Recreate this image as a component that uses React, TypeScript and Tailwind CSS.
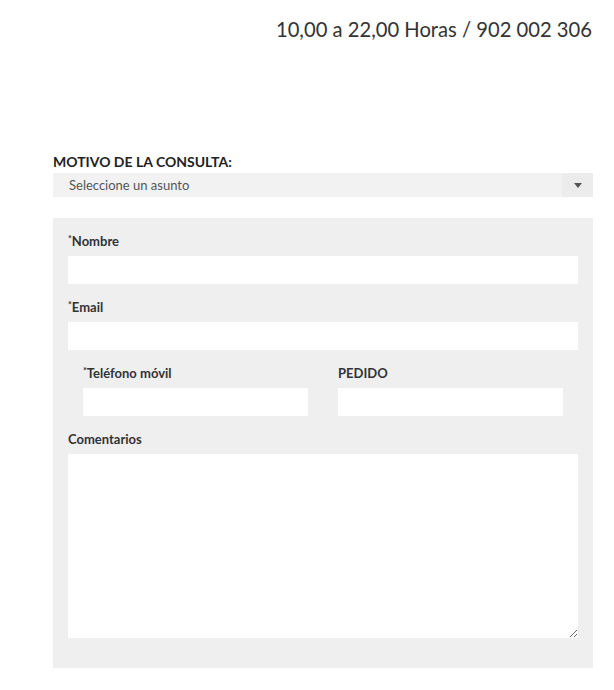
// Formulario de contacto — horario, motivo y datos del cliente

function Label({ text, required }: { text: string; required?: boolean }) {
  return (
    <label className="mb-[5px] block h-[20px] text-[13px] leading-[20px] font-bold text-[#333]">
      {required && <sup className="text-[9px]">*</sup>}
      {text}
    </label>
  );
}

function Input() {
  return <input type="text" className="block h-[28px] w-full bg-white outline-none" />;
}

export default function App() {
  return (
    <div className="w-[614px] bg-white font-['Lato','Liberation_Sans',sans-serif] text-[#333]">
      <div className="pt-[17px] pr-[22px] text-right text-[20.2px] leading-[24px] text-[#333]">
        10,00 a 22,00 Horas / 902 002 306
      </div>

      <div className="mt-[113px] ml-[53px] w-[540px]">
        <div className="mb-[3px] text-[14px] leading-[16px] font-bold text-[#222]">
          MOTIVO DE LA CONSULTA:
        </div>
        <div className="flex h-[24px] items-stretch bg-[#f2f2f2]">
          <span className="flex-1 pl-[16px] text-[13px] leading-[24px] text-[#555]">
            Seleccione un asunto
          </span>
          <span className="flex w-[31px] items-center justify-center bg-[#ececec]">
            <svg width="8" height="5" viewBox="0 0 8 5">
              <path d="M0 0h8L4 5z" fill="#555" />
            </svg>
          </span>
        </div>

        <div className="mt-[21px] bg-[#efefef] px-[15px] pt-[13px] pb-[30px]">
          <Label text="Nombre" required />
          <Input />

          <div className="mt-[13px]">
            <Label text="Email" required />
            <Input />
          </div>

          <div className="mt-[13px] grid grid-cols-2 gap-[30px] px-[15px]">
            <div>
              <Label text="Teléfono móvil" required />
              <Input />
            </div>
            <div>
              <Label text="PEDIDO" />
              <Input />
            </div>
          </div>

          <div className="mt-[13px]">
            <Label text="Comentarios" />
            <textarea className="block h-[184px] w-full bg-white outline-none" />
          </div>
        </div>
      </div>
    </div>
  );
}
